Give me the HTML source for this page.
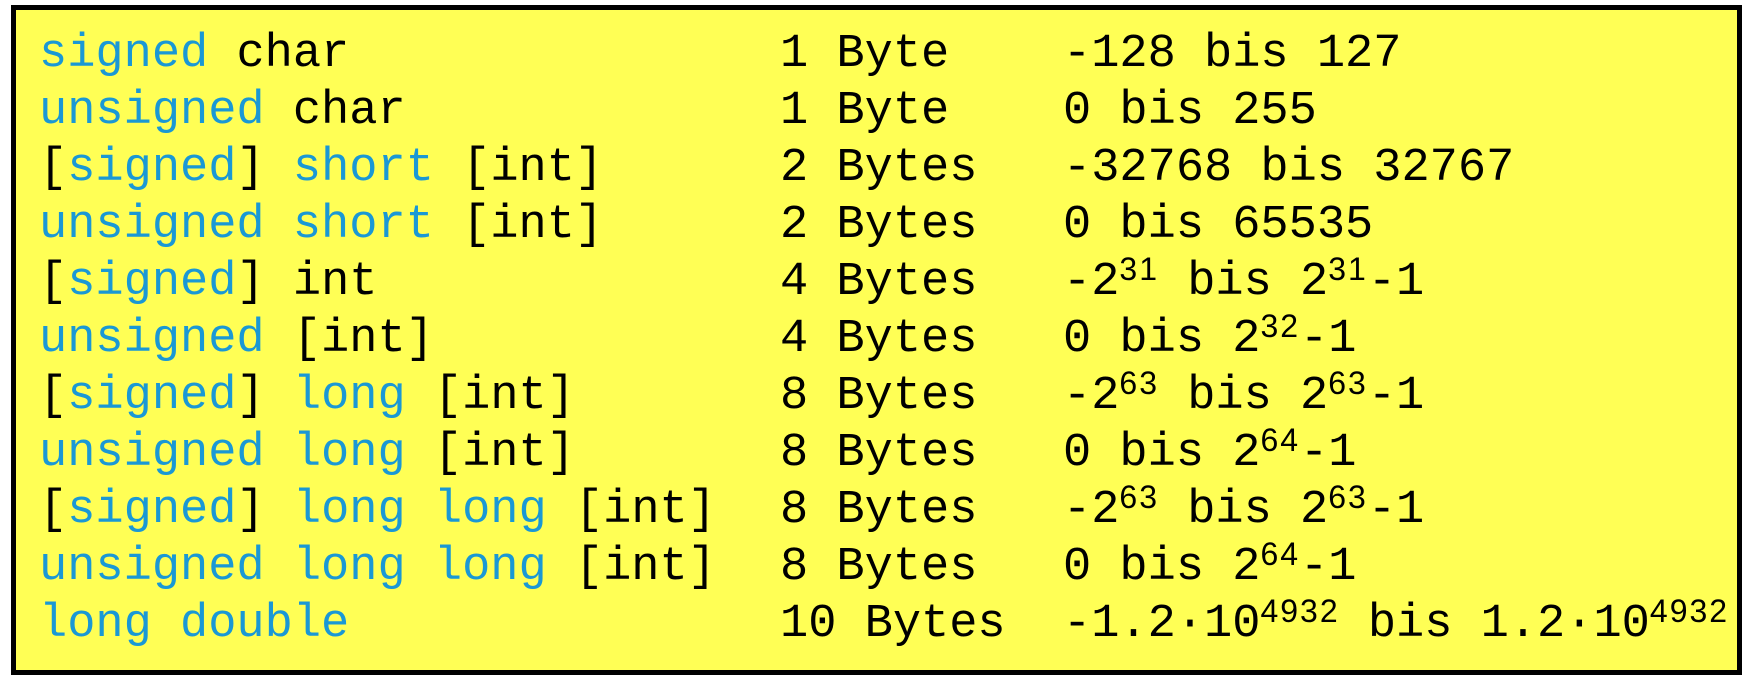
<!DOCTYPE html>
<html><head><meta charset="utf-8"><style>
html,body{margin:0;padding:0;background:#fff;}
body{width:1760px;height:684px;position:relative;overflow:hidden;}
.box{position:absolute;left:11px;top:5px;width:1721px;height:660px;border:5px solid #000;background:#ffff55;}
.row{position:absolute;left:0;height:57px;font-family:"Liberation Mono",monospace;font-size:47px;line-height:57px;color:#000;white-space:pre;}
.b{color:#1a98d5;}
.c1{position:absolute;left:23px;}
.c2{position:absolute;left:764px;}
.c3{position:absolute;left:1047px;}
sup{font-family:"Liberation Sans",sans-serif;font-size:32px;letter-spacing:2px;vertical-align:14px;line-height:0;}
</style></head><body>
<div class="box">
<div class="row" style="top:16px"><span class="c1"><span class="b">signed</span> char</span><span class="c2">1 Byte</span><span class="c3">-128 bis 127</span></div>
<div class="row" style="top:73px"><span class="c1"><span class="b">unsigned</span> char</span><span class="c2">1 Byte</span><span class="c3">0 bis 255</span></div>
<div class="row" style="top:130px"><span class="c1">[<span class="b">signed</span>] <span class="b">short</span> [int]</span><span class="c2">2 Bytes</span><span class="c3">-32768 bis 32767</span></div>
<div class="row" style="top:187px"><span class="c1"><span class="b">unsigned short</span> [int]</span><span class="c2">2 Bytes</span><span class="c3">0 bis 65535</span></div>
<div class="row" style="top:244px"><span class="c1">[<span class="b">signed</span>] int</span><span class="c2">4 Bytes</span><span class="c3">-2<sup>31</sup> bis 2<sup>31</sup>-1</span></div>
<div class="row" style="top:301px"><span class="c1"><span class="b">unsigned</span> [int]</span><span class="c2">4 Bytes</span><span class="c3">0 bis 2<sup>32</sup>-1</span></div>
<div class="row" style="top:358px"><span class="c1">[<span class="b">signed</span>] <span class="b">long</span> [int]</span><span class="c2">8 Bytes</span><span class="c3">-2<sup>63</sup> bis 2<sup>63</sup>-1</span></div>
<div class="row" style="top:415px"><span class="c1"><span class="b">unsigned long</span> [int]</span><span class="c2">8 Bytes</span><span class="c3">0 bis 2<sup>64</sup>-1</span></div>
<div class="row" style="top:472px"><span class="c1">[<span class="b">signed</span>] <span class="b">long long</span> [int]</span><span class="c2">8 Bytes</span><span class="c3">-2<sup>63</sup> bis 2<sup>63</sup>-1</span></div>
<div class="row" style="top:529px"><span class="c1"><span class="b">unsigned long long</span> [int]</span><span class="c2">8 Bytes</span><span class="c3">0 bis 2<sup>64</sup>-1</span></div>
<div class="row" style="top:586px"><span class="c1"><span class="b">long double</span></span><span class="c2">10 Bytes</span><span class="c3">-1.2·10<sup>4932</sup> bis 1.2·10<sup>4932</sup></span></div>
</div>
</body></html>
